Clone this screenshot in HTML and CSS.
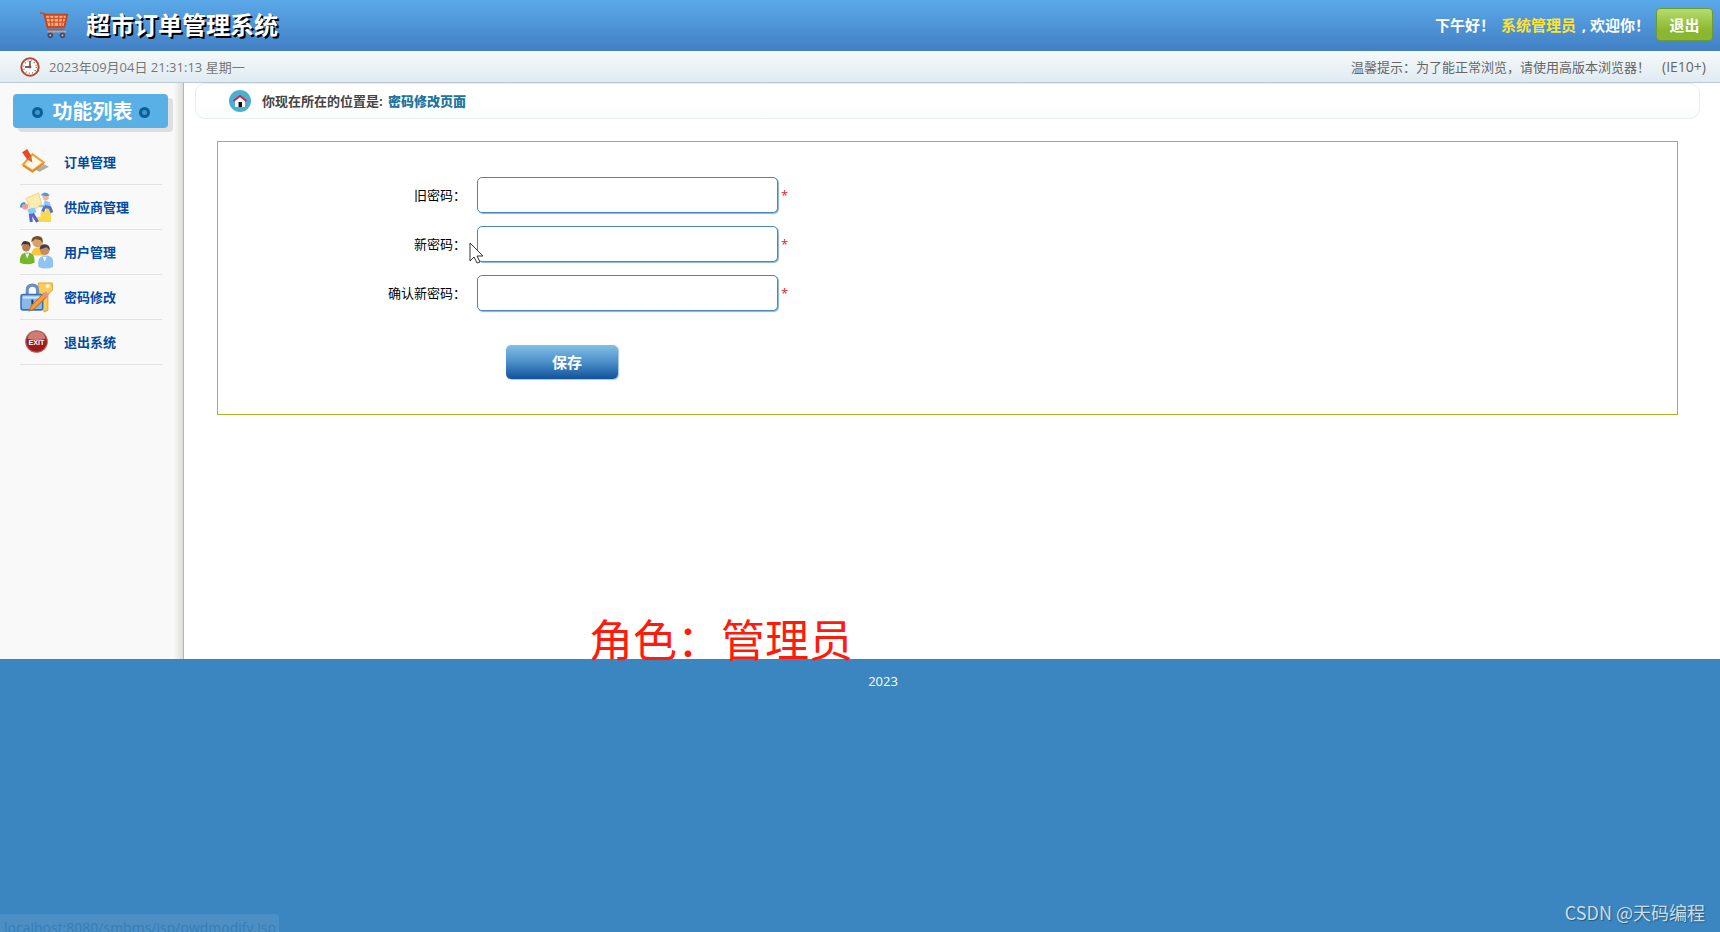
FILE: index.html
```html
<!DOCTYPE html>
<html lang="zh-CN">
<head>
<meta charset="utf-8">
<title>超市订单管理系统</title>
<link rel="stylesheet" href="styles.css">
</head>
<body>
<header class="header">
  <svg class="cart" viewBox="0 0 32 30" aria-hidden="true">
    <path d="M1 2l5 1 4 17h17" fill="none" stroke="#b4583f" stroke-width="2"/>
    <path d="M6 4h24l-3 13H9z" fill="#f3b384" stroke="#c8421c" stroke-width="2"/>
    <path d="M7 8h22M8 12h20M11 4l2 13M16 4v13M21 4v13M26 4l-2 13" fill="none" stroke="#d2502a" stroke-width="1.3"/>
    <path d="M9 22h20" stroke="#a2aab8" stroke-width="2"/>
    <circle cx="12" cy="26" r="3" fill="#4a4e63"/><circle cx="25" cy="26" r="3" fill="#4a4e63"/>
    <circle cx="12" cy="26" r="1" fill="#ccd"/><circle cx="25" cy="26" r="1" fill="#ccd"/>
  </svg>
  <h1 class="title">超市订单管理系统</h1>
  <p class="greeting">下午好！ <span class="user">系统管理员</span> , 欢迎你！</p>
  <button class="logout" type="button">退出</button>
</header>
<section class="infobar">
  <svg class="clock" viewBox="0 0 20 20" aria-hidden="true">
    <circle cx="10" cy="10" r="8.7" fill="#fff" stroke="#b7472f" stroke-width="2"/>
    <circle cx="10" cy="10" r="6.3" fill="none" stroke="#777" stroke-width="1.4" stroke-dasharray="1 2.3"/>
    <path d="M10 4v6H5" fill="none" stroke="#333" stroke-width="1.3"/><circle cx="10" cy="10" r="1.4" fill="#b33"/>
  </svg>
  <time class="date">2023年09月04日 21:31:13 星期一</time>
  <p class="tip">温馨提示：为了能正常浏览，请使用高版本浏览器！<span class="version">(IE10+)</span></p>
</section>
<div class="body">
  <aside class="sidebar">
    <h2 class="menu-title"><i class="dot"></i><span class="menu-name">功能列表</span><i class="dot"></i></h2>
    <nav class="menu">
      <a class="item" href="#order"><svg class="icon" viewBox="0 0 32 32" aria-hidden="true">
        <path d="M15 23l9-5 4 2-9 5z" fill="#999" opacity=".8"/>
        <path d="M3 18L12 8l11 8-11 8z" fill="#fff8e8" stroke="#f0a02c" stroke-width="2"/>
        <path d="M3 19l9 6 11-8" fill="none" stroke="#db8a1e" stroke-width="1.5"/>
        <path d="M2 6l5-3 4 7-4 3z" fill="#e44a25"/><path d="M7 13l4-3 1 6z" fill="#c86a35"/></svg>订单管理</a>
      <a class="item" href="#provider"><svg class="icon" viewBox="0 0 32 32" aria-hidden="true">
        <path d="M15 30v-5h5v-5h5v-5h5v15z" fill="#f8d84e"/>
        <path d="M6 7l12-5 3 11-10 7z" fill="#fdedb0" stroke="#f3d68a"/>
        <circle cx="25" cy="6" r="3" fill="#f3b693"/><path d="M20 4q4-5 9 0l-3 1z" fill="#489de0"/>
        <path d="M24 9l5 2 1 5-6-1-5 1-1-2 5-1z" fill="#8ec7f2"/><path d="M24 15l5 1 2 5M24 15l-2 5" fill="none" stroke="#596fd0" stroke-width="3"/>
        <circle cx="5" cy="15" r="3" fill="#ef9c9d"/><path d="M1 16q0-5 4-4" fill="none" stroke="#3d91d4" stroke-width="2"/>
        <path d="M7 18l7-2 2 4-4 4-3-1z" fill="#8fc9f7"/><path d="M12 22l5 8M10 22l1 8" stroke="#5763ce" stroke-width="3"/></svg>供应商管理</a>
      <a class="item" href="#user"><svg class="icon" viewBox="0 0 32 32" aria-hidden="true">
        <path d="M11 19q0-8 7-8t6 8z" fill="#f5c73c"/><circle cx="17" cy="6" r="5" fill="#d9a06b"/><path d="M11 6q0-6 6-6t5 7l-2-3-5-1z" fill="#73502c"/>
        <path d="M0 26q-1-10 7-10t7 10q-7 3-14 0z" fill="#75b62b"/><circle cx="6" cy="11" r="4" fill="#b97d54"/><path d="M1 10q1-6 5-5 5 0 4 6l-2-3-5 0z" fill="#46342b"/>
        <path d="M18 30q-2-11 7-11t7 11q-7 3-14 0z" fill="#8dc4f2"/><circle cx="24" cy="14" r="4.5" fill="#c98c61"/><path d="M19 13q0-5 5-5t5 6l-3-3z" fill="#424249"/>
        <path d="M5 17l2 5 2-5M22 20l2 5 2-5" fill="#f7fbff"/></svg>用户管理</a>
      <a class="item" href="#password"><svg class="icon" viewBox="0 0 32 32" aria-hidden="true">
        <path d="M18 2h13l1 6-5 5v15l-3 2-3-3V14l-4-5z" fill="#f9cd5a" stroke="#e5a43a"/><circle cx="27" cy="5" r="2" fill="#fff5cc"/>
        <path d="M7 15V9q0-5 5-5t5 5v6" fill="none" stroke="#668fc7" stroke-width="3"/>
        <rect x="1" y="13" width="21" height="15" rx="2" fill="#8bb9e7" stroke="#376fb7" stroke-width="1.5"/><path d="M3 16h17" stroke="#d3e7fa" stroke-width="2"/>
        <path d="M11 18h2v5h-2z" fill="#173c7a"/><path d="M9 29l2-5 12-12 3 3-12 12z" fill="#f49f38" stroke="#c96e29"/><path d="M22 13l3-3 3 3-3 3z" fill="#e59097"/></svg>密码修改</a>
      <a class="item" href="#exit"><svg class="icon" viewBox="0 0 32 32" aria-hidden="true">
        <circle cx="16" cy="15" r="10.5" fill="#9e1a1d" stroke="#b26666"/><path d="M7 12q2-7 9-7t9 7q-9 3-18 0z" fill="#d27a76"/>
        <text x="16" y="18" text-anchor="middle" class="exit-text">EXIT</text></svg>退出系统</a>
    </nav>
  </aside>
  <main class="content">
    <div class="crumb">
      <svg class="home" viewBox="0 0 22 22" aria-hidden="true"><circle cx="11" cy="11" r="11" fill="#4bafcf"/>
        <path d="M6 10l5-4 5 4v7H6z" fill="#fff"/><path d="M9.500 12h3.500v5H9.500z" fill="#111"/><path d="M4.500 11L11 6l6.500 5" fill="none" stroke="#c7274a" stroke-width="2"/></svg>
      <span>你现在所在的位置是: <b class="here">密码修改页面</b></span>
    </div>
    <form class="panel">
      <div class="row"><label class="label" for="old">旧密码：</label><input class="field" id="old" type="password"><span class="star">*</span></div>
      <div class="row"><label class="label" for="new">新密码：</label><input class="field" id="new" type="password"><span class="star">*</span></div>
      <div class="row"><label class="label" for="again">确认新密码：</label><input class="field" id="again" type="password"><span class="star">*</span></div>
      <button class="save" type="button">保存</button>
    </form>
  </main>
</div>
<footer class="footer">2023</footer>
<div class="caption">角色：管理员</div>
<div class="status">localhost:8080/smbms/jsp/pwdmodify.jsp</div>
<div class="watermark">CSDN @天码编程</div>
<svg class="cursor" viewBox="0 0 15 22" aria-hidden="true"><path d="M1 1v18l4-4 3 6 3-1-3-6h6z" fill="#fff" stroke="#333"/></svg>
</body>
</html>
```
FILE: styles.css
```css
* { box-sizing: border-box; }
body {
  margin: 0;
  min-height: 100vh;
  display: flex;
  flex-direction: column;
  position: relative;
  background: #fff;
  font: 13px/20px "Open Sans", "Noto Sans CJK SC", sans-serif;
}
h1, h2, p { margin: 0; }
.header {
  display: flex;
  align-items: center;
  height: 51px;
  padding: 0 7px 2px 39px;
  background: linear-gradient(#5ba9e8, #427fc5);
  color: #fff;
}
.cart { width: 30px; height: 30px; }
.title {
  margin-left: 17px;
  font-size: 24px;
  line-height: 36px;
  text-shadow: 2px 2px 0 #000;
}
.greeting {
  margin-left: auto;
  font-size: 15px;
  font-weight: bold;
  white-space: pre;
}
.user { color: #ffe32e; margin: 0 2px; }
.logout {
  width: 57px;
  height: 33px;
  margin-left: 6px;
  padding: 0;
  border: 1px solid #6a9a3a;
  border-radius: 4px;
  background: linear-gradient(#b5dc6c, #8bb62f 70%);
  color: #fff;
  font: bold 15px/20px "Open Sans", "Noto Sans CJK SC", sans-serif;
}
.infobar {
  display: flex;
  align-items: center;
  height: 32px;
  padding: 0 14px 0 20px;
  border-bottom: 1px solid #b9c9d6;
  background: linear-gradient(#f6f9f9, #dfebf2);
  color: #666;
}
.clock { width: 20px; height: 20px; }
.date { margin-left: 9px; color: #777; }
.tip { margin-left: auto; }
.version { margin-left: 12px; font-size: 14px; }
.body { display: flex; min-height: 576px; }
.sidebar {
  width: 184px;
  padding: 11px 15px 0 13px;
  border-right: 1px solid #9fb9cf;
  background: linear-gradient(to left, #ddddda, #f9f9f9 9px);
}
.menu-title {
  display: flex;
  align-items: center;
  justify-content: center;
  gap: 6px;
  height: 34px;
  padding-top: 2px;
  border-radius: 4px;
  background: #58b0e6;
  box-shadow: 5px 4px 0 #dedede;
  color: #fff;
  font-size: 20px;
}
.menu-name { margin-left: 4px; }
.dot {
  width: 11px;
  height: 11px;
  border: 3px solid #075f9c;
  border-radius: 50%;
  background: #4a94c4;
}
.menu { margin: 12px 6px 0 7px; }
.item {
  display: flex;
  align-items: center;
  gap: 11px;
  min-height: 45px;
  border-bottom: 1px solid #e2e2e2;
  color: #004a9f;
  font-weight: bold;
  text-decoration: none;
}
.icon { width: 33px; height: 33px; }
.exit-text { font: bold 7px "Liberation Sans", sans-serif; fill: #fff; }
.content { flex: 1; padding: 0 20px 0 11px; }
.crumb {
  display: flex;
  align-items: center;
  gap: 11px;
  height: 36px;
  padding-left: 33px;
  border: 1px solid #e7edf2;
  border-radius: 10px;
  background: linear-gradient(#fff 60%, #fafdfd);
  color: #444;
  font-weight: bold;
}
.home { width: 22px; height: 22px; }
.here { margin-left: 2px; color: #20749d; }
.panel {
  margin: 22px 22px 0;
  padding: 35px 0 35px;
  border: 1px solid #a9b823;
}
.row { display: flex; align-items: center; height: 36px; margin-bottom: 13px; }
.label { width: 248px; text-align: right; color: #000; }
.field {
  width: 301px;
  height: 36px;
  margin-left: 11px;
  padding: 0 8px;
  border: 1px solid #4a88b8;
  border-radius: 5px;
  background: #fff;
  box-shadow: 1px 1px 1px #8bb2d0;
}
.star { margin-left: 3px; color: #e02020; }
.save {
  display: block;
  width: 112px;
  height: 34px;
  margin: 34px 0 0 288px;
  padding: 0 0 0 10px;
  border: 0;
  border-radius: 5px;
  background: linear-gradient(#80c0e8, #4d8fc8 50%, #10529b);
  box-shadow: 1px 1px 1px #a8c4dc;
  color: #fff;
  font: bold 15px/20px "Open Sans", "Noto Sans CJK SC", sans-serif;
}
.footer {
  flex: 1;
  padding: 12px 0 0 46px;
  background: #3b86c0;
  color: #fff;
  text-align: center;
}
.caption {
  position: absolute;
  left: 589px;
  top: 610px;
  color: #ff1a0c;
  font-size: 44px;
  line-height: 60px;
}
.status {
  position: absolute;
  left: 0;
  bottom: 0;
  width: 279px;
  height: 18px;
  padding: 0 4px;
  overflow: hidden;
  border-radius: 0 4px 0 0;
  background: #4b8fc5;
  color: #387db4;
  font-size: 14px;
  line-height: 28px;
}
.watermark {
  position: absolute;
  right: 15px;
  bottom: 7px;
  color: #cbdde9;
  font: 18px/26px "Noto Sans CJK SC", sans-serif;
  text-shadow: 1px 1px 1px #25587f;
}
.cursor { position: absolute; left: 469px; top: 242px; width: 15px; height: 22px; }
```
